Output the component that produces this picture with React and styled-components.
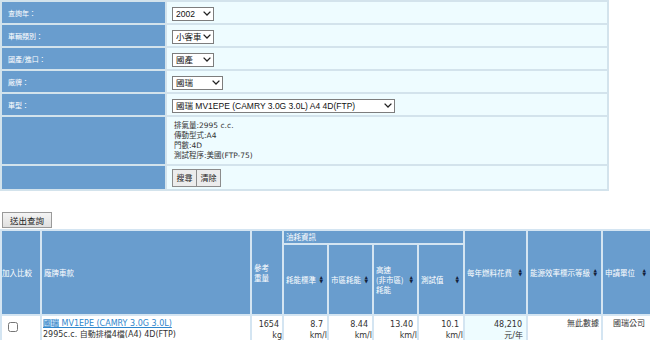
import React from "react";
import styled, { createGlobalStyle } from "styled-components";

const GlobalStyle = createGlobalStyle`
  html, body {
    margin: 0;
    padding: 0;
    background: #fff;
    overflow: hidden;
  }
  body {
    font-family: "DejaVu Sans", "Noto Sans CJK TC", sans-serif;
    color: #333;
  }
  * { box-sizing: border-box; }
`;

const BLUE = "#699dce";
const CYAN = "#eefcff";
const NAVY = "#14223c";

const Page = styled.div`
  width: 650px;
  height: 340px;
  overflow: hidden;
`;

const FormTable = styled.table`
  width: 609px;
  table-layout: fixed;
  border-collapse: separate;
  border-spacing: 2px;
  background: #d3e3ec;
`;

const Label = styled.th`
  height: ${(p) => p.$h || 21}px;
  padding: 0 0 0 6px;
  background: ${BLUE};
  color: #fff;
  font: 7px "Noto Sans CJK TC", sans-serif;
  font-weight: normal;
  text-align: left;
  vertical-align: middle;
`;

const Value = styled.td`
  height: ${(p) => p.$h || 21}px;
  padding: 0 0 0 5px;
  background: ${CYAN};
  vertical-align: middle;
`;

const SelectBox = styled.span`
  position: relative;
  display: inline-block;
  vertical-align: middle;
`;

const Select = styled.select`
  appearance: none;
  display: block;
  width: ${(p) => p.$w}px;
  height: 14px;
  margin: 0;
  padding: 0 0 0 3px;
  border: 1px solid #7d7d7d;
  border-radius: 0;
  background: #fff;
  color: #111;
  font: 8.5px "Liberation Sans", "Noto Sans CJK TC", sans-serif;
`;

const Chevron = styled.svg`
  position: absolute;
  right: 3px;
  top: 4px;
  pointer-events: none;
`;

const Specs = styled.div`
  padding-left: 2px;
  font: 7.5px "DejaVu Sans", "Noto Sans CJK TC", sans-serif;
  line-height: 10px;
  color: #333;
`;

const ButtonGroup = styled.div`
  display: flex;
`;

const SmallButton = styled.button`
  height: 18px;
  width: 25px;
  margin: 0;
  padding: 0;
  border: 1px solid #8c8c8c;
  background: #ececec;
  color: #222;
  font: 8px "Noto Sans CJK TC", sans-serif;
  & + & { margin-left: -1px; }
`;

const SubmitBar = styled.div`
  display: flex;
  padding: 21px 0 1px 2px;
`;

const SubmitButton = styled.button`
  width: 50px;
  height: 16px;
  margin: 0;
  padding: 0;
  border: 1px solid #9a9a9a;
  background: linear-gradient(#f4f4f4, #e0e0e0);
  color: #222;
  font: 8.5px "Noto Sans CJK TC", sans-serif;
`;

const ResultTable = styled.table`
  width: 652px;
  table-layout: fixed;
  border-collapse: separate;
  border-spacing: 2px;
  background: #d4e5f2;
`;

const HeadRow = styled.tr`
  height: ${(p) => p.$h}px;
`;

const Th = styled.th`
  padding: 0 0 0 ${(p) => (p.$tight ? 0 : 2)}px;
  background: ${BLUE};
  color: #fff;
  font: 7.5px "Noto Sans CJK TC", sans-serif;
  font-weight: normal;
  line-height: 10px;
  text-align: left;
  vertical-align: middle;
`;

const SortCell = styled.div`
  display: flex;
  align-items: center;
  justify-content: space-between;
  padding-right: 4px;
`;

/* up/down sort arrows as two tiny triangle glyphs */
const Arrows = styled.span`
  display: flex;
  flex-direction: column;
  align-items: center;
  flex-shrink: 0;
  color: ${NAVY};
  font: 4.5px "DejaVu Sans", sans-serif;
  line-height: 4px;
`;

const SortTh = ({ children, ...rest }) => (
  <Th {...rest}>
    <SortCell>
      <span>{children}</span>
      <Arrows>
        <span>▲</span>
        <span>▼</span>
      </Arrows>
    </SortCell>
  </Th>
);

const Td = styled.td`
  padding: 2px ${(p) => p.$pr || 0}px 0 ${(p) => p.$pl || 0}px;
  background: ${(p) => (p.$hl ? CYAN : "#fff")};
  font: 8px "DejaVu Sans", "Noto Sans CJK TC", sans-serif;
  line-height: 11px;
  color: #333;
  text-align: ${(p) => p.$align || "left"};
  vertical-align: top;
`;

const Check = styled.input`
  width: 10px;
  height: 10px;
  margin: 4px 0 0 6px;
`;

const CarLink = styled.a`
  color: #2f86cc;
  text-decoration: underline;
`;

const Brand = styled.span`
  background: #b7dbf5;
  color: #2f7ec2;
`;

const Num = styled.div`
  padding-right: ${(p) => p.$pr}px;
  margin-top: 1px;
`;

const fields = [
  { label: "查詢年：", value: "2002", w: 42 },
  { label: "車輛類別：", value: "小客車", w: 42 },
  { label: "國產/進口：", value: "國產", w: 42 },
  { label: "廠牌：", value: "國瑞", w: 51 },
  { label: "車型：", value: "國瑞 MV1EPE (CAMRY 3.0G 3.0L) A4 4D(FTP)", w: 223 },
];

const Dropdown = ({ value, w }) => (
  <SelectBox>
    <Select $w={w} defaultValue={value}>
      <option>{value}</option>
    </Select>
    <Chevron width="8" height="5" viewBox="0 0 8 5">
      <polyline points="0.6,0.6 4,4 7.4,0.6" fill="none" stroke="#222" strokeWidth="1.3" />
    </Chevron>
  </SelectBox>
);

const readings = [
  { n: "8.7", u: "km/l" },
  { n: "8.44", u: "km/l" },
  { n: "13.40", u: "km/l" },
  { n: "10.1", u: "km/l" },
];

export default function App() {
  return (
    <Page>
      <GlobalStyle />
      <FormTable>
        <colgroup>
          <col width="163" />
          <col width="440" />
        </colgroup>
        <tbody>
          {fields.map((f) => (
            <tr key={f.label}>
              <Label>{f.label}</Label>
              <Value>
                <Dropdown value={f.value} w={f.w} />
              </Value>
            </tr>
          ))}
          <tr>
            <Label $h={47} />
            <Value $h={47}>
              <Specs>
                排氣量:2995 c.c.<br />
                傳動型式:A4<br />
                門數:4D<br />
                測試程序:美國(FTP-75)
              </Specs>
            </Value>
          </tr>
          <tr>
            <Label $h={23} />
            <Value $h={23}>
              <ButtonGroup>
                <SmallButton>搜尋</SmallButton>
                <SmallButton>清除</SmallButton>
              </ButtonGroup>
            </Value>
          </tr>
        </tbody>
      </FormTable>

      <SubmitBar>
        <SubmitButton>送出查詢</SubmitButton>
      </SubmitBar>

      <ResultTable>
        <colgroup>
          <col width="38" />
          <col width="208" />
          <col width="30" />
          <col width="43" />
          <col width="43" />
          <col width="43" />
          <col width="44" />
          <col width="61" />
          <col width="73" />
          <col width="47" />
        </colgroup>
        <thead>
          <HeadRow $h={12}>
            <Th rowSpan={2} $tight>加入比較</Th>
            <Th rowSpan={2}>廠牌車款</Th>
            <Th rowSpan={2}>參考<br />重量</Th>
            <Th colSpan={4}>油耗資訊</Th>
            <SortTh rowSpan={2}>每年燃料花費</SortTh>
            <SortTh rowSpan={2}>能源效率標示等級</SortTh>
            <SortTh rowSpan={2}>申請單位</SortTh>
          </HeadRow>
          <HeadRow $h={69}>
            <SortTh>耗能標準</SortTh>
            <SortTh>市區耗能</SortTh>
            <SortTh>高速<br />(非市區)<br />耗能</SortTh>
            <SortTh>測試值</SortTh>
          </HeadRow>
        </thead>
        <tbody>
          <tr>
            <Td><Check type="checkbox" /></Td>
            <Td $pl={1}>
              <CarLink href="#"><Brand>國瑞</Brand> MV1EPE (CAMRY 3.0G 3.0L)</CarLink>
              <br />
              2995c.c. 自動排檔4檔(A4) 4D(FTP)
            </Td>
            <Td $align="right">
              <Num $pr={3}>1654</Num>
              <div>kg</div>
            </Td>
            {readings.map((r, i) => (
              <Td key={i} $align="right">
                <Num $pr={4}>{r.n}</Num>
                <div>{r.u}</div>
              </Td>
            ))}
            <Td $align="right" $hl $pr={3}>
              <Num $pr={1}>48,210</Num>
              <div>元/年</div>
            </Td>
            <Td $align="right" $pr={2}>無此數據</Td>
            <Td $pl={10}>國瑞公司</Td>
          </tr>
        </tbody>
      </ResultTable>
    </Page>
  );
}
